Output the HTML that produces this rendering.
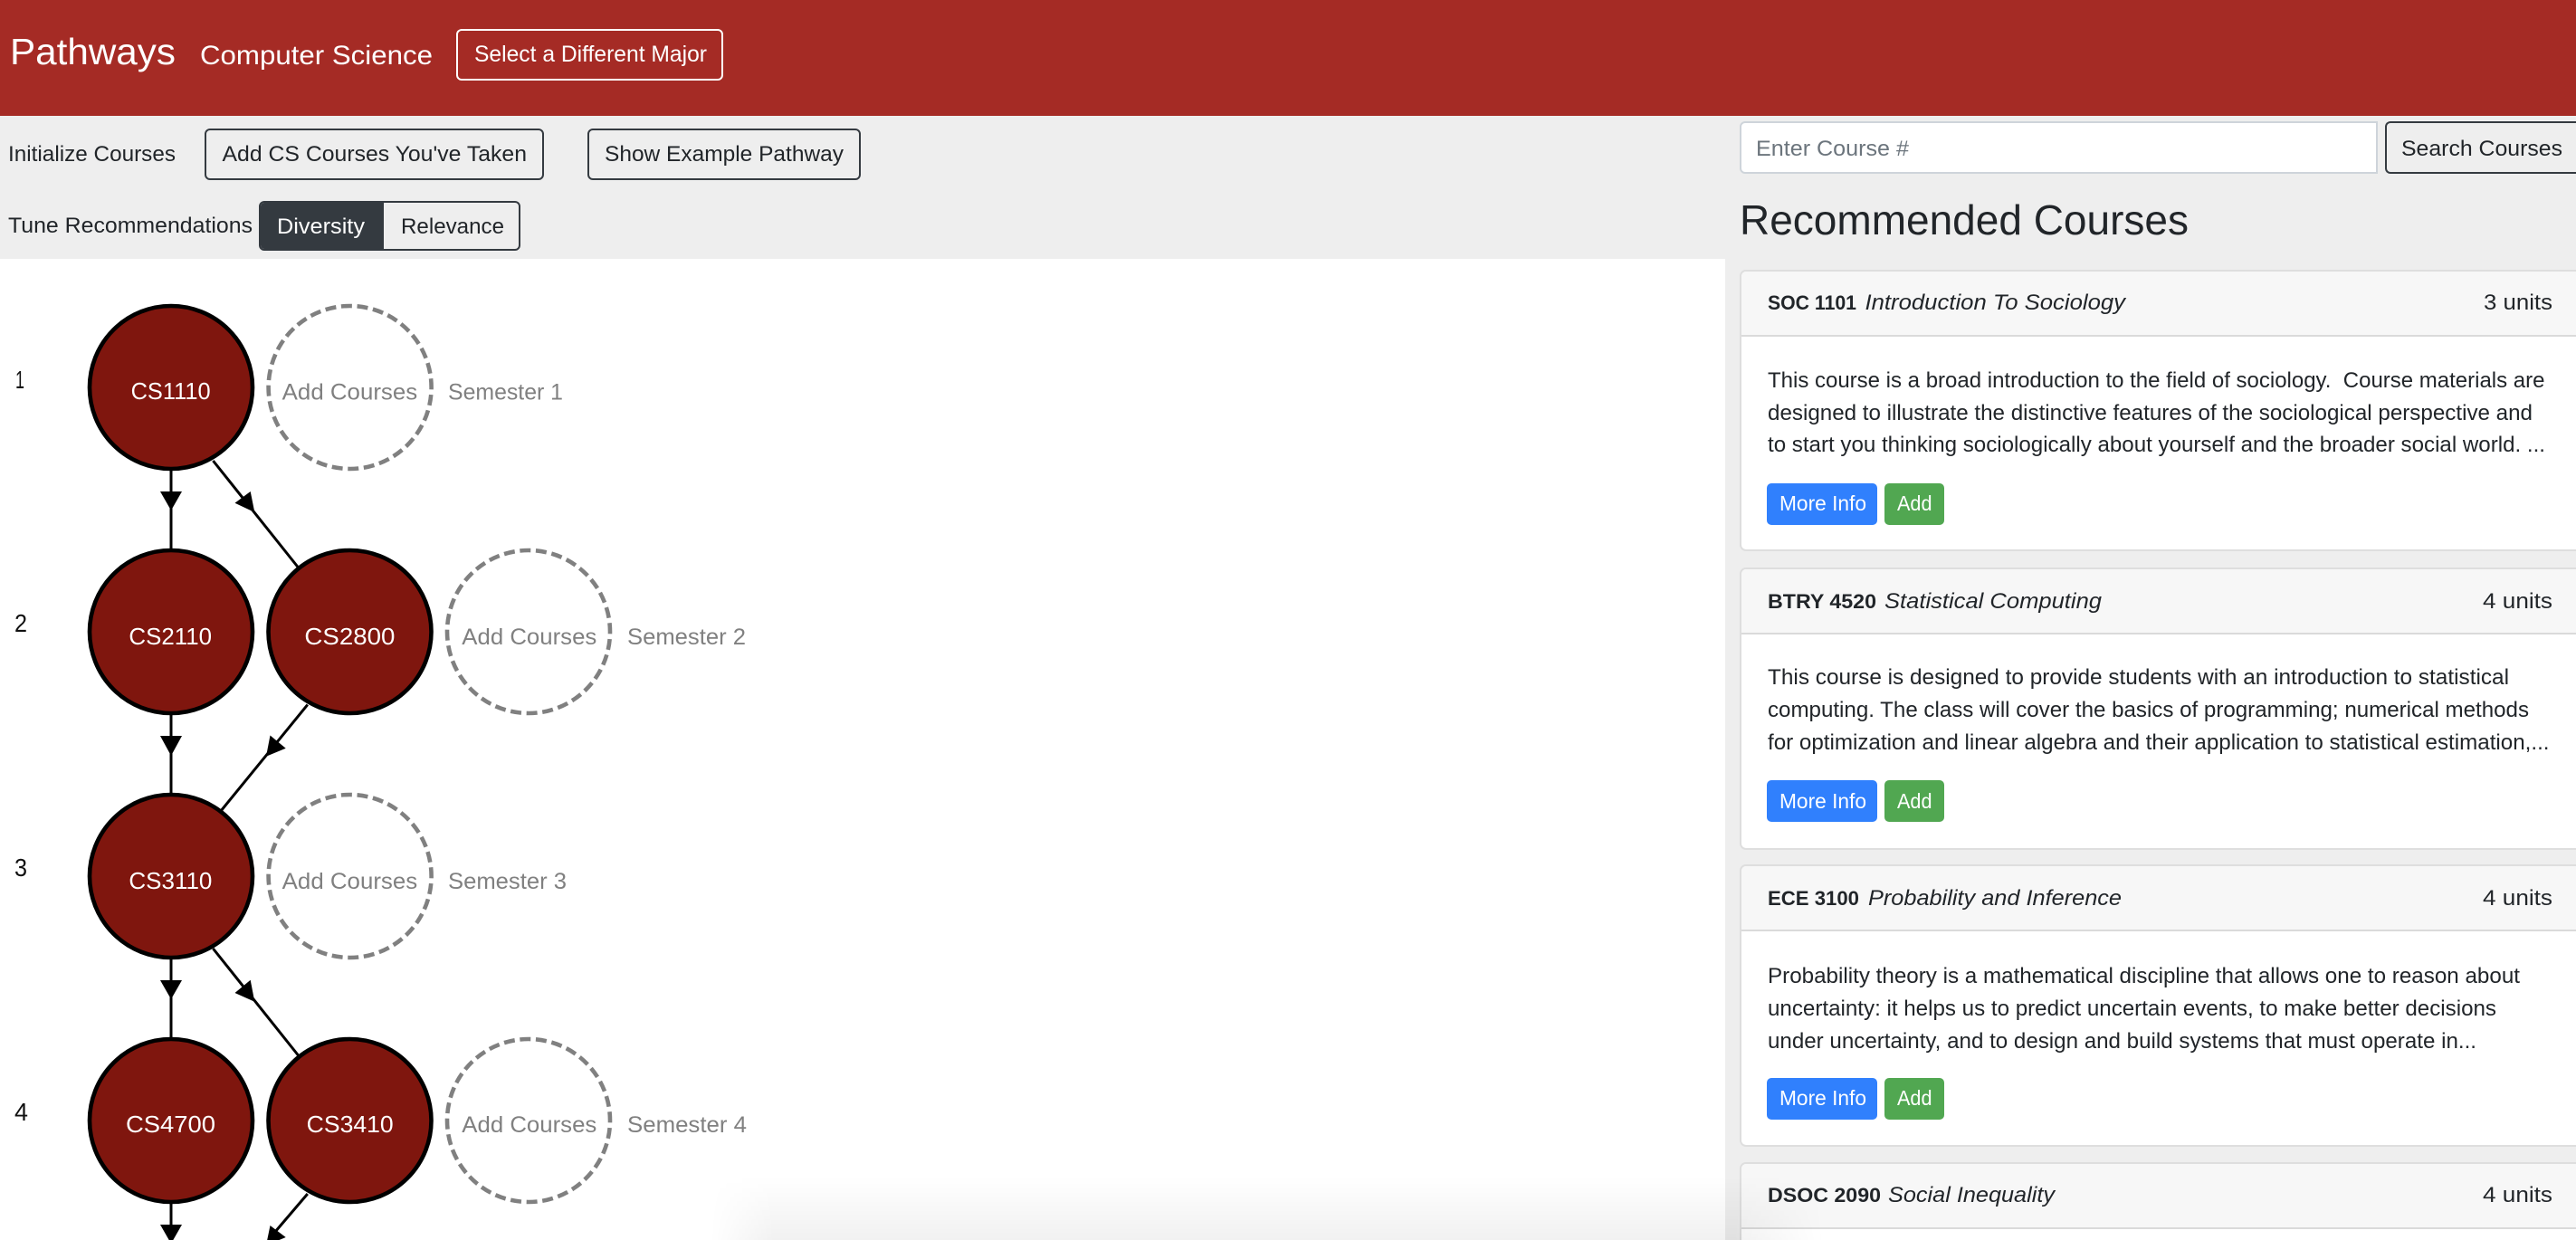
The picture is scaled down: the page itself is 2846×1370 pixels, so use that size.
<!DOCTYPE html>
<html lang="en">
<head>
<meta charset="utf-8">
<title>Pathways</title>
<style>
html,body{margin:0;padding:0;width:2846px;height:1370px;overflow:hidden;background:#eee}
*{box-sizing:border-box}
#page{position:relative;width:2846px;height:1370px;overflow:hidden;background:#eee;contain:paint}
.a{position:absolute}
.header{left:0;top:0;width:2846px;height:128px;background:#a52b25}
.graph{left:0;top:286px;width:1906px;height:1084px;background:#fff;overflow:hidden}
.shade{left:785px;top:1300px;width:1230px;height:70px;background:linear-gradient(to bottom,rgba(0,0,0,0),rgba(0,0,0,.055));-webkit-mask-image:linear-gradient(to right,transparent,#000 70px,#000 1130px,transparent);mask-image:linear-gradient(to right,transparent,#000 70px,#000 1130px,transparent)}
.btn{border:2px solid #343a40;border-radius:6px;background:transparent}
.card{left:1922px;width:924px;background:#fff;border:2px solid #dedede;border-right:0;border-radius:7px 0 0 7px;overflow:hidden}
.card .h{height:72px;background:#f7f7f7;border-bottom:2px solid #dadada}
.b{border-radius:5px}
.blue{background:#3080fd;left:1952px;width:122px}
.green{background:#51a751;left:2082px;width:66px}
svg.o{position:absolute;left:0;top:0;width:2846px;height:1370px;overflow:hidden}
svg text{font-family:"Liberation Sans",sans-serif;font-size:24px;fill:#212529;white-space:pre}
.w{fill:#fff}
.g{fill:#808080;font-size:25px}
.n{fill:#fff;font-size:26px}
.d{fill:#111;font-size:28px}
.t{font-weight:bold;font-size:22px}
.i{font-style:italic}
.p{fill:#6c757d}
.c{font-size:23px;fill:#fff}
</style>
</head>
<body>
<div id="page">
<div class="a header"></div>
<div class="a btn" style="left:504px;top:32px;width:295px;height:57px;border-color:#fff"></div>
<div class="a btn" style="left:226px;top:142px;width:375px;height:57px"></div>
<div class="a btn" style="left:649px;top:142px;width:302px;height:57px"></div>
<div class="a btn" style="left:286px;top:222px;width:289px;height:55px;overflow:hidden"><div style="width:136px;height:55px;background:#343a40"></div></div>
<div class="a" style="left:1922px;top:134px;width:705px;height:58px;background:#fff;border:2px solid #ced4da;border-radius:6px 0 0 6px"></div>
<div class="a btn" style="left:2635px;top:134px;width:211px;height:58px;border-right:0;border-radius:6px 0 0 6px"></div>
<div class="a graph"></div>
<div class="a card" style="top:298px;height:311px"><div class="h"></div></div>
<div class="a card" style="top:627px;height:312px"><div class="h"></div></div>
<div class="a card" style="top:955px;height:312px"><div class="h"></div></div>
<div class="a card" style="top:1284px;height:86px;border-bottom:0;border-radius:7px 0 0 0"><div class="h"></div></div>
<div class="a b blue" style="top:534px;height:46px"></div><div class="a b green" style="top:534px;height:46px"></div>
<div class="a b blue" style="top:862px;height:46px"></div><div class="a b green" style="top:862px;height:46px"></div>
<div class="a b blue" style="top:1191px;height:46px"></div><div class="a b green" style="top:1191px;height:46px"></div>
<div class="a shade"></div>
<svg class="o" viewBox="0 0 2846 1370" xmlns="http://www.w3.org/2000/svg">
<!-- header -->
<text class="w" x="11" y="71" style="font-size:41px" textLength="183" lengthAdjust="spacingAndGlyphs">Pathways</text>
<text class="w" x="221" y="71" style="font-size:30px" textLength="257" lengthAdjust="spacingAndGlyphs">Computer Science</text>
<text class="w" x="524" y="68" style="font-size:25px" textLength="257" lengthAdjust="spacingAndGlyphs">Select a Different Major</text>
<!-- controls -->
<text x="9" y="178" textLength="185" lengthAdjust="spacingAndGlyphs">Initialize Courses</text>
<text x="245.5" y="178" textLength="336.5" lengthAdjust="spacingAndGlyphs">Add CS Courses You've Taken</text>
<text x="668" y="178" textLength="264" lengthAdjust="spacingAndGlyphs">Show Example Pathway</text>
<text x="9" y="257" textLength="270" lengthAdjust="spacingAndGlyphs">Tune Recommendations</text>
<text class="w" x="306" y="258" textLength="97" lengthAdjust="spacingAndGlyphs">Diversity</text>
<text x="443" y="258" textLength="114" lengthAdjust="spacingAndGlyphs">Relevance</text>
<!-- search -->
<text class="p" x="1940" y="172" textLength="169" lengthAdjust="spacingAndGlyphs">Enter Course #</text>
<text x="2653" y="172" textLength="178" lengthAdjust="spacingAndGlyphs">Search Courses</text>
<text x="1922" y="259" style="font-size:46px" textLength="496" lengthAdjust="spacingAndGlyphs">Recommended Courses</text>
<!-- graph edges -->
<g stroke="#000" stroke-width="3" fill="none">
<path d="M189 520V607M235.4 509L329.5 627M189 790V877M339.8 778.6L244 896M189 1060V1147M235.4 1048L329.5 1166M189 1330V1368M339.8 1319L298 1368"/>
</g>
<g fill="#000">
<path d="M177 543H201L189 564Z"/>
<path d="M276.7 543L259.5 555.7L281.3 566Z"/>
<path d="M177 813H201L189 835Z"/>
<path d="M298.5 812.5L315.7 826.8L294 835.7Z"/>
<path d="M177 1083H201L189 1104Z"/>
<path d="M276.7 1082.7L259.5 1097L281.3 1106.7Z"/>
<path d="M177 1353H201L191.3 1370H186.7Z"/>
<path d="M298.5 1354L315.7 1367L308.5 1370H295.2Z"/>
</g>
<g fill="#7f160e" stroke="#000" stroke-width="4.6">
<circle cx="189" cy="428" r="90"/>
<circle cx="189" cy="698" r="90"/>
<circle cx="386.5" cy="698" r="90"/>
<circle cx="189" cy="968" r="90"/>
<circle cx="189" cy="1238" r="90"/>
<circle cx="386.5" cy="1238" r="90"/>
</g>
<g fill="none" stroke="#808080" stroke-width="4.6" stroke-dasharray="12 5.66" stroke-dashoffset="9.6">
<circle cx="386.6" cy="428" r="90"/>
<circle cx="584" cy="698" r="90"/>
<circle cx="386.6" cy="968" r="90"/>
<circle cx="584" cy="1238" r="90"/>
</g>
<text class="d" x="17" y="429" textLength="10" lengthAdjust="spacingAndGlyphs">1</text>
<text class="d" x="16" y="698" textLength="14" lengthAdjust="spacingAndGlyphs">2</text>
<text class="d" x="16" y="968" textLength="14" lengthAdjust="spacingAndGlyphs">3</text>
<text class="d" x="16" y="1238" textLength="15" lengthAdjust="spacingAndGlyphs">4</text>
<text class="n" x="144.6" y="441" textLength="88" lengthAdjust="spacingAndGlyphs">CS1110</text>
<text class="n" x="142.4" y="712" textLength="91.6" lengthAdjust="spacingAndGlyphs">CS2110</text>
<text class="n" x="336.4" y="712" textLength="100" lengthAdjust="spacingAndGlyphs">CS2800</text>
<text class="n" x="142.4" y="982" textLength="92" lengthAdjust="spacingAndGlyphs">CS3110</text>
<text class="n" x="139" y="1251" textLength="99" lengthAdjust="spacingAndGlyphs">CS4700</text>
<text class="n" x="338.7" y="1251" textLength="96" lengthAdjust="spacingAndGlyphs">CS3410</text>
<text class="g" x="311.7" y="441.5" textLength="149.5" lengthAdjust="spacingAndGlyphs">Add Courses</text>
<text class="g" x="495" y="441.5" textLength="127" lengthAdjust="spacingAndGlyphs">Semester 1</text>
<text class="g" x="510.3" y="712" textLength="149" lengthAdjust="spacingAndGlyphs">Add Courses</text>
<text class="g" x="693" y="712" textLength="131" lengthAdjust="spacingAndGlyphs">Semester 2</text>
<text class="g" x="311.7" y="982" textLength="149.5" lengthAdjust="spacingAndGlyphs">Add Courses</text>
<text class="g" x="495" y="982" textLength="131" lengthAdjust="spacingAndGlyphs">Semester 3</text>
<text class="g" x="510.3" y="1251" textLength="149" lengthAdjust="spacingAndGlyphs">Add Courses</text>
<text class="g" x="693" y="1251" textLength="132" lengthAdjust="spacingAndGlyphs">Semester 4</text>
<!-- card 1 -->
<text class="t" x="1953" y="342" textLength="98" lengthAdjust="spacingAndGlyphs">SOC 1101</text>
<text class="i" x="2060.5" y="342" textLength="287.5" lengthAdjust="spacingAndGlyphs">Introduction To Sociology</text>
<text x="2744" y="342" textLength="76" lengthAdjust="spacingAndGlyphs">3 units</text>
<text x="1953" y="428" textLength="858.5" lengthAdjust="spacingAndGlyphs">This course is a broad introduction to the field of sociology.  Course materials are</text>
<text x="1953" y="464" textLength="845" lengthAdjust="spacingAndGlyphs">designed to illustrate the distinctive features of the sociological perspective and</text>
<text x="1953" y="499" textLength="859" lengthAdjust="spacingAndGlyphs">to start you thinking sociologically about yourself and the broader social world. ...</text>
<text class="c" x="1966" y="564" textLength="96" lengthAdjust="spacingAndGlyphs">More Info</text>
<text class="c" x="2096" y="564" textLength="38.5" lengthAdjust="spacingAndGlyphs">Add</text>
<!-- card 2 -->
<text class="t" x="1953" y="672" textLength="120" lengthAdjust="spacingAndGlyphs">BTRY 4520</text>
<text class="i" x="2082" y="672" textLength="240" lengthAdjust="spacingAndGlyphs">Statistical Computing</text>
<text x="2743" y="672" textLength="77" lengthAdjust="spacingAndGlyphs">4 units</text>
<text x="1953" y="756" textLength="819" lengthAdjust="spacingAndGlyphs">This course is designed to provide students with an introduction to statistical</text>
<text x="1953" y="792" textLength="841" lengthAdjust="spacingAndGlyphs">computing. The class will cover the basics of programming; numerical methods</text>
<text x="1953" y="828" textLength="863.5" lengthAdjust="spacingAndGlyphs">for optimization and linear algebra and their application to statistical estimation,...</text>
<text class="c" x="1966" y="893" textLength="96" lengthAdjust="spacingAndGlyphs">More Info</text>
<text class="c" x="2096" y="893" textLength="38.5" lengthAdjust="spacingAndGlyphs">Add</text>
<!-- card 3 -->
<text class="t" x="1953" y="1000" textLength="101" lengthAdjust="spacingAndGlyphs">ECE 3100</text>
<text class="i" x="2064" y="1000" textLength="280" lengthAdjust="spacingAndGlyphs">Probability and Inference</text>
<text x="2743" y="1000" textLength="77" lengthAdjust="spacingAndGlyphs">4 units</text>
<text x="1953" y="1086" textLength="831" lengthAdjust="spacingAndGlyphs">Probability theory is a mathematical discipline that allows one to reason about</text>
<text x="1953" y="1122" textLength="805" lengthAdjust="spacingAndGlyphs">uncertainty: it helps us to predict uncertain events, to make better decisions</text>
<text x="1953" y="1158" textLength="783" lengthAdjust="spacingAndGlyphs">under uncertainty, and to design and build systems that must operate in...</text>
<text class="c" x="1966" y="1221" textLength="96" lengthAdjust="spacingAndGlyphs">More Info</text>
<text class="c" x="2096" y="1221" textLength="38.5" lengthAdjust="spacingAndGlyphs">Add</text>
<!-- card 4 -->
<text class="t" x="1953" y="1328" textLength="125" lengthAdjust="spacingAndGlyphs">DSOC 2090</text>
<text class="i" x="2086" y="1328" textLength="184" lengthAdjust="spacingAndGlyphs">Social Inequality</text>
<text x="2743" y="1328" textLength="77" lengthAdjust="spacingAndGlyphs">4 units</text>
</svg>
</div>
</body>
</html>
